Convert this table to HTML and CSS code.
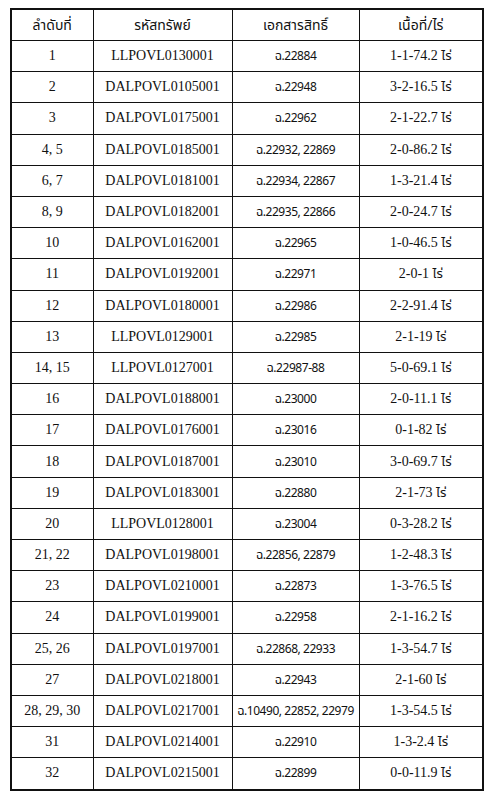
FILE: index.html
```html
<!DOCTYPE html>
<html lang="th">
<head>
<meta charset="utf-8">
<title>ตาราง</title>
<link rel="stylesheet" href="styles.css">
</head>
<body>
<table class="grid">
<colgroup><col class="c1"><col class="c2"><col class="c3"><col class="c4"></colgroup>
<thead>
<tr class="head"><th>ลำดับที่</th><th>รหัสทรัพย์</th><th>เอกสารสิทธิ์</th><th>เนื้อที่/ไร่</th></tr>
</thead>
<tbody>
<tr><td>1</td><td>LLPOVL0130001</td><td class="doc">ฉ.22884</td><td>1-1-74.2 <span class="th">ไร่</span></td></tr>
<tr><td>2</td><td>DALPOVL0105001</td><td class="doc">ฉ.22948</td><td>3-2-16.5 <span class="th">ไร่</span></td></tr>
<tr><td>3</td><td>DALPOVL0175001</td><td class="doc">ฉ.22962</td><td>2-1-22.7 <span class="th">ไร่</span></td></tr>
<tr><td>4, 5</td><td>DALPOVL0185001</td><td class="doc">ฉ.22932, 22869</td><td>2-0-86.2 <span class="th">ไร่</span></td></tr>
<tr><td>6, 7</td><td>DALPOVL0181001</td><td class="doc">ฉ.22934, 22867</td><td>1-3-21.4 <span class="th">ไร่</span></td></tr>
<tr><td>8, 9</td><td>DALPOVL0182001</td><td class="doc">ฉ.22935, 22866</td><td>2-0-24.7 <span class="th">ไร่</span></td></tr>
<tr><td>10</td><td>DALPOVL0162001</td><td class="doc">ฉ.22965</td><td>1-0-46.5 <span class="th">ไร่</span></td></tr>
<tr><td>11</td><td>DALPOVL0192001</td><td class="doc">ฉ.22971</td><td>2-0-1 <span class="th">ไร่</span></td></tr>
<tr><td>12</td><td>DALPOVL0180001</td><td class="doc">ฉ.22986</td><td>2-2-91.4 <span class="th">ไร่</span></td></tr>
<tr><td>13</td><td>LLPOVL0129001</td><td class="doc">ฉ.22985</td><td>2-1-19 <span class="th">ไร่</span></td></tr>
<tr><td>14, 15</td><td>LLPOVL0127001</td><td class="doc">ฉ.22987-88</td><td>5-0-69.1 <span class="th">ไร่</span></td></tr>
<tr><td>16</td><td>DALPOVL0188001</td><td class="doc">ฉ.23000</td><td>2-0-11.1 <span class="th">ไร่</span></td></tr>
<tr><td>17</td><td>DALPOVL0176001</td><td class="doc">ฉ.23016</td><td>0-1-82 <span class="th">ไร่</span></td></tr>
<tr><td>18</td><td>DALPOVL0187001</td><td class="doc">ฉ.23010</td><td>3-0-69.7 <span class="th">ไร่</span></td></tr>
<tr><td>19</td><td>DALPOVL0183001</td><td class="doc">ฉ.22880</td><td>2-1-73 <span class="th">ไร่</span></td></tr>
<tr><td>20</td><td>LLPOVL0128001</td><td class="doc">ฉ.23004</td><td>0-3-28.2 <span class="th">ไร่</span></td></tr>
<tr><td>21, 22</td><td>DALPOVL0198001</td><td class="doc">ฉ.22856, 22879</td><td>1-2-48.3 <span class="th">ไร่</span></td></tr>
<tr><td>23</td><td>DALPOVL0210001</td><td class="doc">ฉ.22873</td><td>1-3-76.5 <span class="th">ไร่</span></td></tr>
<tr><td>24</td><td>DALPOVL0199001</td><td class="doc">ฉ.22958</td><td>2-1-16.2 <span class="th">ไร่</span></td></tr>
<tr><td>25, 26</td><td>DALPOVL0197001</td><td class="doc">ฉ.22868, 22933</td><td>1-3-54.7 <span class="th">ไร่</span></td></tr>
<tr><td>27</td><td>DALPOVL0218001</td><td class="doc">ฉ.22943</td><td>2-1-60 <span class="th">ไร่</span></td></tr>
<tr><td>28, 29, 30</td><td>DALPOVL0217001</td><td class="doc">ฉ.10490, 22852, 22979</td><td>1-3-54.5 <span class="th">ไร่</span></td></tr>
<tr><td>31</td><td>DALPOVL0214001</td><td class="doc">ฉ.22910</td><td>1-3-2.4 <span class="th">ไร่</span></td></tr>
<tr><td>32</td><td>DALPOVL0215001</td><td class="doc">ฉ.22899</td><td>0-0-11.9 <span class="th">ไร่</span></td></tr>
</tbody>
</table>
</body>
</html>
```

FILE: styles.css
```css
html, body {
  margin: 0;
  padding: 0;
  background: #ffffff;
}

body {
  padding: 8px 0 0 10px;
}

.grid {
  border-collapse: collapse;
  table-layout: fixed;
  width: 472px;
  border: 2px solid #111;
  font-family: "Liberation Serif", "Noto Sans Thai", "Tahoma", "DejaVu Sans", serif;
  font-size: 14px;
  color: #111;
}

.c1 { width: 82px; }
.c2 { width: 139px; }
.c3 { width: 127px; }
.c4 { width: 124px; }

.grid th,
.grid td {
  border: 1.5px solid #111;
  text-align: center;
  vertical-align: middle;
  padding: 0;
  white-space: nowrap;
  overflow: hidden;
}

.grid th {
  font-family: "Noto Sans Thai", "Tahoma", "DejaVu Sans", "Noto Sans", sans-serif;
  font-weight: normal;
  font-size: 14px;
  height: 30px;
}

.grid td {
  height: 30.2px;
}

.grid td.doc {
  font-family: "Noto Sans Thai", "Tahoma", "DejaVu Sans", "Noto Sans", sans-serif;
  font-size: 12px;
  letter-spacing: -0.45px;
}

.th {
  font-family: "Noto Sans Thai", "Tahoma", "DejaVu Sans", "Noto Sans", sans-serif;
  font-size: 13px;
}
```
